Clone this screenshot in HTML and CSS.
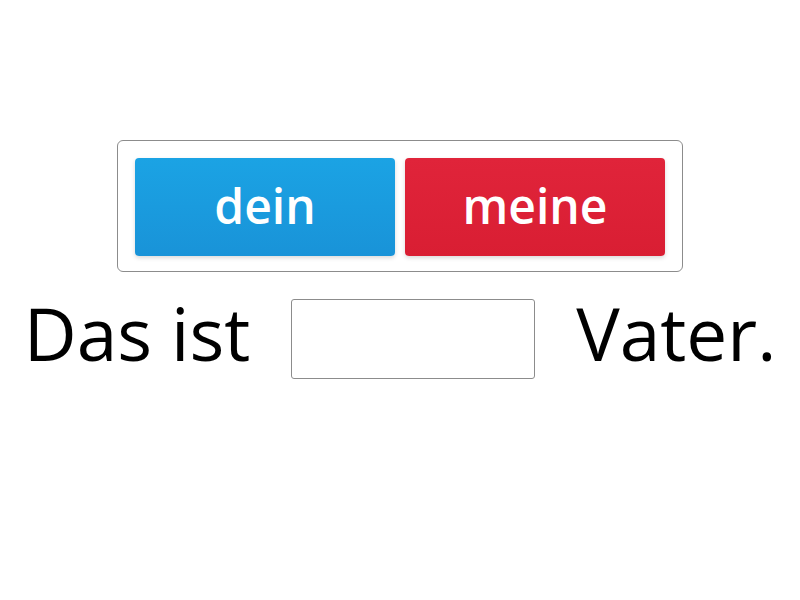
FILE: index.html
```html
<!DOCTYPE html>
<html>
<head>
<meta charset="utf-8">
<link rel="stylesheet" href="styles.css">
</head>
<body>
<div class="page">
  <div class="options">
    <div class="opt blue">dein</div>
    <div class="opt red">meine</div>
  </div>
  <div class="sentence">
    <span class="word">Das ist</span>
    <div class="blank"></div>
    <span class="word">Vater.</span>
  </div>
</div>
</body>
</html>
```
FILE: styles.css
```css
html, body {
  margin: 0;
  padding: 0;
  background: #fff;
}
body {
  width: 800px;
  height: 600px;
  font-family: "Open Sans", "Liberation Sans", sans-serif;
}
.page {
  display: flex;
  flex-direction: column;
  align-items: center;
  padding-top: 140px;
}
.options {
  width: 566px;
  height: 132px;
  box-sizing: border-box;
  border: 1.5px solid #8c8c8c;
  border-radius: 6px;
  padding: 17px 17px 15px;
  display: flex;
  gap: 10px;
}
.opt {
  flex: 1;
  border-radius: 4px;
  color: #fff;
  font-weight: 600;
  font-size: 48px;
  display: flex;
  align-items: center;
  justify-content: center;
  box-shadow: 0 2px 4px rgba(0,0,0,0.15);
  padding-bottom: 4px;
}
.blue {
  background: linear-gradient(#1ba3e4, #1993d8);
}
.red {
  background: linear-gradient(#e0243a, #d91e33);
}
.sentence {
  display: flex;
  align-items: flex-start;
  gap: 41px;
  margin-top: 24px;
}
.word {
  font-size: 73px;
  color: #000;
  line-height: 1;
}
.blank {
  width: 242px;
  height: 78px;
  border: 1.5px solid #8c8c8c;
  border-radius: 3px;
  margin-top: 3px;
}
```
